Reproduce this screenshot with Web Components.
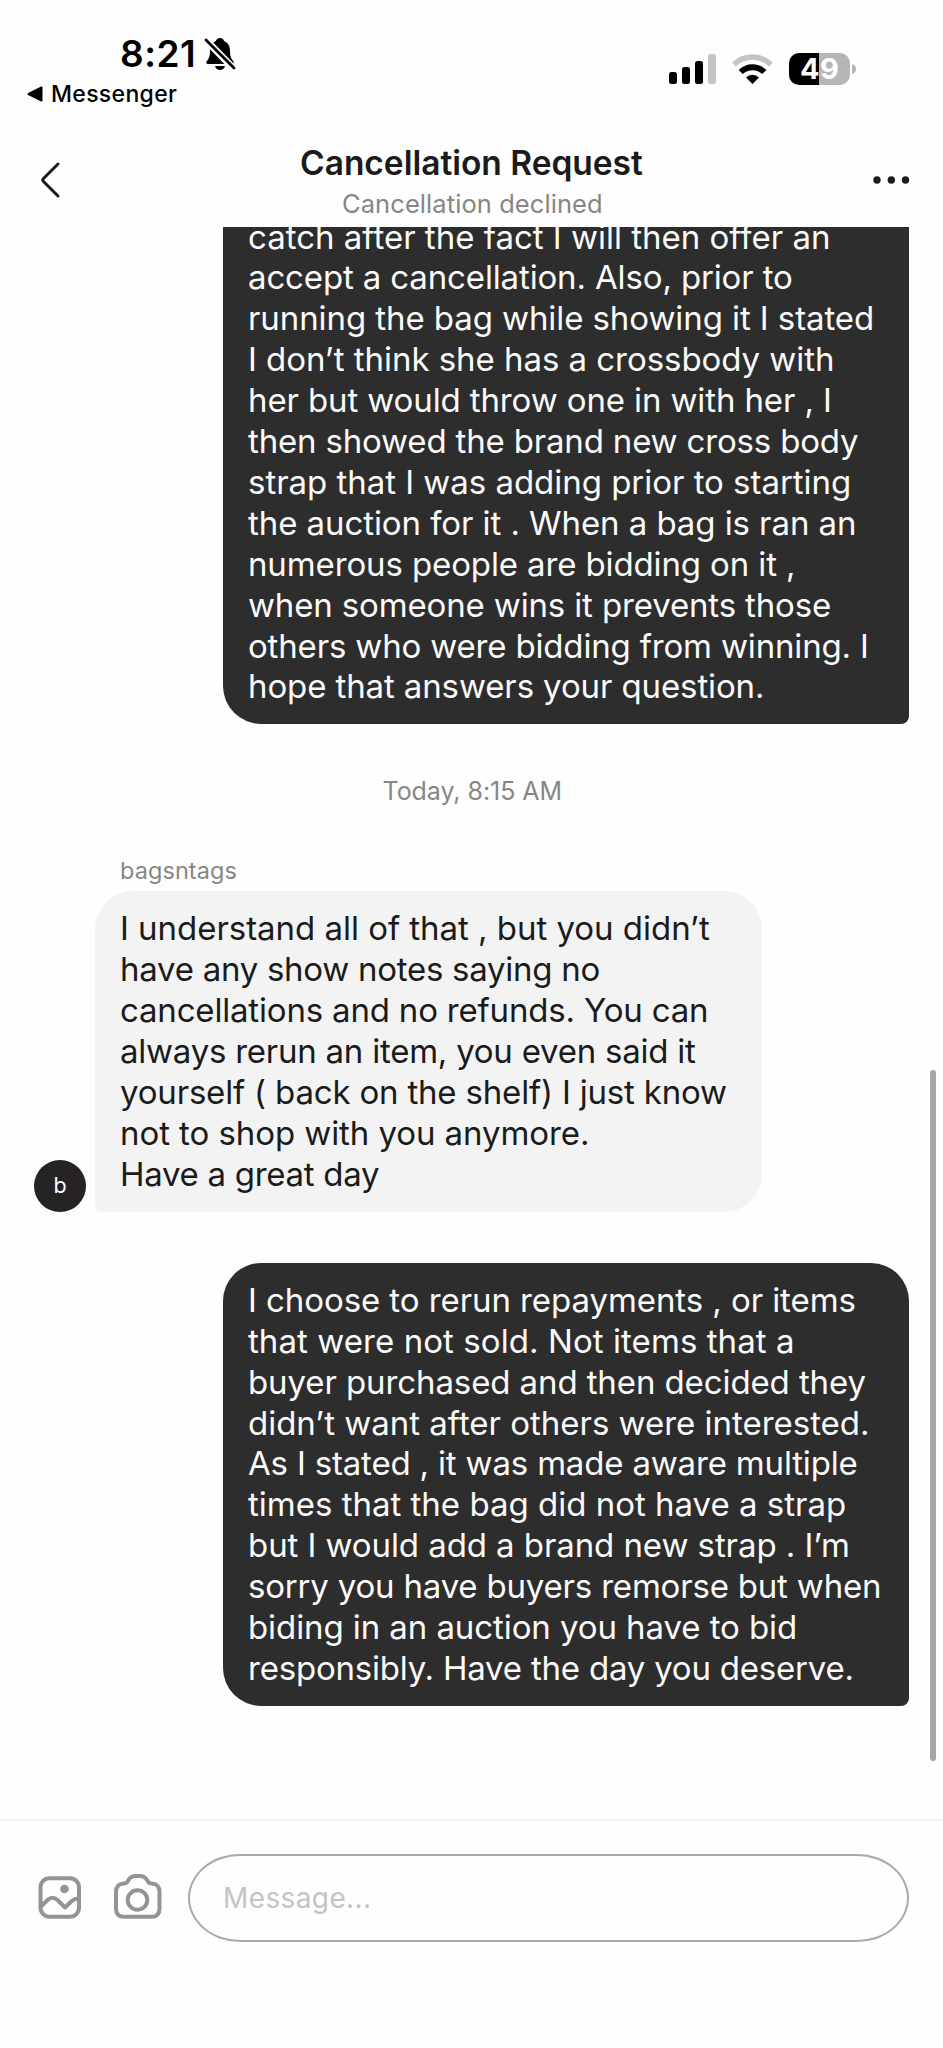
<!DOCTYPE html>
<html lang="en">
<head>
<meta charset="utf-8">
<title>Cancellation Request</title>
<style>
  html, body {
    margin: 0;
    background: #fefefe;
    font-family: Inter, "Liberation Sans", sans-serif;
  }
</style>
</head>
<body>
<phone-screen>
  <status-bar slot="status" time="8:21" app="Messenger" battery="49"></status-bar>
  <chat-header slot="header" heading="Cancellation Request" status="Cancellation declined"></chat-header>

  <chat-bubble mine continued>
    <text-line w="580">catch after the fact I will then offer an</text-line>
    <text-line w="544">accept a cancellation. Also, prior to</text-line>
    <text-line w="624">running the bag while showing it I stated</text-line>
    <text-line w="584">I don’t think she has a crossbody with</text-line>
    <text-line w="581">her but would throw one in with her , I</text-line>
    <text-line w="610">then showed the brand new cross body</text-line>
    <text-line w="601">strap that I was adding prior to starting</text-line>
    <text-line w="606">the auction for it . When a bag is ran an</text-line>
    <text-line w="545">numerous people are bidding on it ,</text-line>
    <text-line w="582">when someone wins it prevents those</text-line>
    <text-line w="618">others who were bidding from winning. I</text-line>
    <text-line w="514">hope that answers your question.</text-line>
  </chat-bubble>

  <chat-date>Today, 8:15 AM</chat-date>

  <chat-bubble author="bagsntags">
    <text-line w="590">I understand all of that , but you didn’t</text-line>
    <text-line w="479.5">have any show notes saying no</text-line>
    <text-line w="586">cancellations and no refunds. You can</text-line>
    <text-line w="576">always rerun an item, you even said it</text-line>
    <text-line w="606">yourself ( back on the shelf) I just know</text-line>
    <text-line w="467">not to shop with you anymore.</text-line>
    <text-line w="259">Have a great day</text-line>
  </chat-bubble>

  <chat-bubble mine>
    <text-line w="606.5">I choose to rerun repayments , or items</text-line>
    <text-line w="544">that were not sold. Not items that a</text-line>
    <text-line w="617.5">buyer purchased and then decided they</text-line>
    <text-line w="619">didn’t want after others were interested.</text-line>
    <text-line w="608.5">As I stated , it was made aware multiple</text-line>
    <text-line w="597">times that the bag did not have a strap</text-line>
    <text-line w="600">but I would add a brand new strap . I’m</text-line>
    <text-line w="631">sorry you have buyers remorse but when</text-line>
    <text-line w="547">biding in an auction you have to bid</text-line>
    <text-line w="603.5">responsibly. Have the day you deserve.</text-line>
  </chat-bubble>

  <message-bar slot="footer" placeholder="Message..."></message-bar>
</phone-screen>

<script>
const attach = (el, html) => {
  const template = document.createElement('template');
  template.innerHTML = html;
  el.attachShadow({ mode: 'open' }).appendChild(template.content.cloneNode(true));
};

const ctx = document.createElement('canvas').getContext('2d');

// One line of text, tracked so that its last glyph ends at `w` pixels
class TextLine extends HTMLElement {
  constructor() {
    super();
    attach(this, `
      <style>
        :host { display: block; white-space: nowrap; }
      </style>
      <slot></slot>
    `);
  }

  connectedCallback() {
    const w = parseFloat(this.getAttribute('w'));
    const text = this.textContent.trim();
    const style = getComputedStyle(this);
    ctx.font = `${style.fontWeight} ${style.fontSize} ${style.fontFamily}`;
    const natural = ctx.measureText(text).actualBoundingBoxRight;
    this.style.width = `${w}px`;
    if (text.length > 1) {
      this.style.letterSpacing = `${(w - natural) / (text.length - 1)}px`;
    }
  }
}

class PhoneScreen extends HTMLElement {
  constructor() {
    super();
    attach(this, `
      <style>
        :host {
          position: relative;
          display: flex;
          flex-direction: column;
          width: 943px;
          height: 2048px;
          overflow: hidden;
        }
        main {
          flex: 1;
          min-height: 0;
          overflow: hidden;
          display: flex;
          flex-direction: column;
        }
        .scrollbar {
          position: absolute;
          left: 930px;
          top: 1070px;
          width: 6px;
          height: 691px;
          border-radius: 3px;
          background: #a6a6a6;
        }
      </style>
      <slot name="status"></slot>
      <slot name="header"></slot>
      <main><slot></slot></main>
      <slot name="footer"></slot>
      <div class="scrollbar"></div>
    `);
  }
}

class StatusBar extends HTMLElement {
  constructor() {
    super();
    attach(this, `
      <style>
        :host {
          display: flex;
          justify-content: space-between;
          height: 130px;
          box-sizing: border-box;
          padding: 31px 86px 0 26px;
          color: #000;
        }
        .clock { display: flex; padding-left: 94px; height: 44px; }
        .clock text-line { font-size: 37px; font-weight: 600; line-height: 46px; }
        .bell { margin: 6px 0 0 11px; }
        .back { display: flex; margin-top: 5px; height: 28px; }
        .back svg { margin: 6px 8px 0 1px; }
        .back text-line { font-size: 23px; font-weight: 450; line-height: 29px; }
        .right { display: flex; margin-top: 22px; height: 32px; }
        .signal { margin-right: 14px; }
        .wifi { margin-right: 15px; }
        .battery {
          width: 61px;
          height: 32px;
          box-sizing: border-box;
          border-radius: 10px;
          padding-left: 11px;
          background: linear-gradient(90deg, #000 30px, #b6b6b6 30px);
          color: #fff;
        }
        .battery text-line { font-size: 29px; font-weight: 700; line-height: 32px; }
        .nub { margin: 11px 0 0 2px; }
      </style>
      <div>
        <div class="clock">
          <text-line w="73">${this.getAttribute('time')}</text-line>
          <svg class="bell" width="32" height="34" viewBox="0 0 32 34">
            <path d="M16 1c2.400 0 3.900 1.500 4.100 3 3.700 1.600 5.900 4.900 5.900 9.500 0 6 1 7.900 3.200 10.500.9 1.100.7 3.100-1.200 3.100H4c-2 0-2.200-1.800-1.200-3 2.200-2.600 3.200-4.600 3.200-10.600 0-4.600 2.200-7.900 5.900-9.500C12.100 2.500 13.600 1 16 1Z"/>
            <path d="M11 29h10c-.7 2.400-2.600 4-5 4s-4.300-1.600-5-4Z"/>
            <path d="M0 1 31 33" stroke="#fefefe" stroke-width="7"/>
            <path d="M2 3 30 31" stroke="#000" stroke-width="2.800" stroke-linecap="round"/>
          </svg>
        </div>
        <div class="back">
          <svg width="16" height="16" viewBox="0 0 16 16">
            <path d="M1.500 8 14.500 1.500v13Z" stroke="#000" stroke-width="2" stroke-linejoin="round"/>
          </svg>
          <text-line w="126">${this.getAttribute('app')}</text-line>
        </div>
      </div>
      <div class="right">
        <svg class="signal" width="48" height="32" viewBox="0 0 48 32">
          <rect x="0" y="19" width="8" height="12" rx="2.500"/>
          <rect x="13" y="14" width="8" height="17" rx="2.500"/>
          <rect x="26" y="8" width="8" height="23" rx="2.500"/>
          <rect x="39" y="1" width="8" height="30" rx="2.500" fill="#c4c4c4"/>
        </svg>
        <svg class="wifi" width="43" height="32" viewBox="0 0 43 32" fill="none">
          <path d="M3 11.500a26.500 26.500 0 0 1 37 0" stroke="#c4c4c4" stroke-width="5.500"/>
          <path d="M9.700 19a17 17 0 0 1 23.600 0" stroke="#000" stroke-width="5.800"/>
          <path d="M21.500 31 15 24.500a9.300 9.300 0 0 1 13 0Z" fill="#000"/>
        </svg>
        <div class="battery"><text-line w="38">${this.getAttribute('battery')}</text-line></div>
        <svg class="nub" width="5" height="10" viewBox="0 0 5 10">
          <path d="M0 0c2.500.5 4 2.500 4 5s-1.500 4.500-4 5Z" fill="#b6b6b6"/>
        </svg>
      </div>
    `);
  }
}

class ChatHeader extends HTMLElement {
  constructor() {
    super();
    attach(this, `
      <style>
        :host {
          display: grid;
          grid-template-columns: 60px 1fr 60px;
          height: 97px;
          box-sizing: border-box;
          padding: 0 33px 0 33px;
        }
        .back { margin: 31px 0 0 6px; }
        .more { margin: 43px 0 0 20px; }
        .titles {
          display: flex;
          flex-direction: column;
          align-items: center;
          padding-top: 13px;
        }
        .heading { font-size: 33.500px; font-weight: 600; line-height: 40px; color: #1b1b1b; }
        .status { margin-top: 4px; font-size: 25.500px; line-height: 33px; color: #868686; }
      </style>
      <svg class="back" width="22" height="38" viewBox="0 0 22 38">
        <path d="M19 3 4.500 17.500q-1.500 1.500 0 3L19 35" fill="none" stroke="#1b1b1b" stroke-width="3" stroke-linecap="round" stroke-linejoin="round"/>
      </svg>
      <div class="titles">
        <text-line class="heading" w="343">${this.getAttribute('heading')}</text-line>
        <text-line class="status" w="259">${this.getAttribute('status')}</text-line>
      </div>
      <svg class="more" width="40" height="14" viewBox="0 0 40 14" fill="#1b1b1b">
        <circle cx="7" cy="7" r="3.700"/>
        <circle cx="21.300" cy="7" r="3.700"/>
        <circle cx="35.500" cy="7" r="3.700"/>
      </svg>
    `);
  }
}

class ChatDate extends HTMLElement {
  constructor() {
    super();
    attach(this, `
      <style>
        :host {
          display: flex;
          justify-content: center;
          margin: 50.700px 0 50.200px;
          font-size: 25px;
          line-height: 32px;
          color: #868686;
        }
      </style>
      <text-line w="178">${this.textContent}</text-line>
    `);
  }
}

class ChatBubble extends HTMLElement {
  constructor() {
    super();
    const author = this.getAttribute('author');
    attach(this, `
      <style>
        :host {
          display: flex;
          flex: none;
          align-items: flex-end;
          padding-left: 34px;
          font-size: 33px;
          line-height: 40.900px;
        }
        :host([mine]) { padding-left: 223px; margin-top: 51.200px; }
        :host([mine][continued]) { margin-top: -27.500px; }
        .avatar {
          flex: none;
          width: 52px;
          height: 52px;
          margin-right: 9px;
          border-radius: 50%;
          background: #252324;
          color: #fff;
          font-size: 21.500px;
          line-height: 51px;
          text-align: center;
        }
        .author {
          margin: 0 0 6px 25px;
          font-size: 23.500px;
          line-height: 28px;
          color: #868686;
        }
        .bubble {
          box-sizing: border-box;
          width: 667px;
          padding: 17px 25px;
          border-radius: 38px 38px 38px 7px;
          background: #f3f3f3;
          color: #1b1b1b;
        }
        :host([mine]) .bubble {
          width: 685.500px;
          border-radius: 38px 38px 8px 38px;
          background: #2d2d2d;
          color: #fafafa;
        }
        :host([continued]) .bubble { border-radius: 0 0 8px 38px; }
      </style>
      ${author ? `<div class="avatar">${author[0]}</div>` : ''}
      <div>
        ${author ? `<text-line class="author" w="116.500">${author}</text-line>` : ''}
        <div class="bubble"><slot></slot></div>
      </div>
    `);
  }
}

class MessageBar extends HTMLElement {
  constructor() {
    super();
    attach(this, `
      <style>
        :host {
          display: flex;
          height: 229.500px;
          box-sizing: border-box;
          padding: 33px 34px 0 36px;
          border-top: 2px solid #f1f1f1;
        }
        svg { flex: none; margin-top: 18px; }
        .photo { margin-right: 28px; }
        .camera { margin-right: 24px; }
        .field {
          flex: 1;
          height: 88px;
          box-sizing: border-box;
          border: 2px solid #a9a9a9;
          border-radius: 52px / 44px;
          padding: 0 33px;
          font-size: 28px;
          line-height: 85px;
          color: #c4c4c4;
        }
      </style>
      <svg class="photo" width="48" height="50" viewBox="0 0 48 50" fill="none" stroke="#949494" stroke-width="4">
        <rect x="4.500" y="6.300" width="38.500" height="38.500" rx="9"/>
        <path d="M5 34.500 11.500 28q5-4.500 10 0l7.500 7.500 6.500-6.300q3.500-3 7.500-2.700" stroke-linejoin="round"/>
        <circle cx="28.500" cy="17" r="4.300" fill="#949494" stroke="none"/>
      </svg>
      <svg class="camera" width="52" height="50" viewBox="0 0 52 50" fill="none" stroke="#949494" stroke-width="4" stroke-linejoin="round">
        <path d="M4 20q0-8 7.500-8.500c3 0 3.500-1 5-3.500 2-3.200 3.500-4 7-4h4.500c3.500 0 5 .8 7 4 1.500 2.500 2 3.500 5 3.500q7.500.5 7.500 8.500v16.500q0 8.300-8 8.300H12q-8 0-8-8.300Z"/>
        <circle cx="25.500" cy="28" r="9.800"/>
      </svg>
      <div class="field"><text-line w="146">${this.getAttribute('placeholder')}</text-line></div>
    `);
  }
}

customElements.define('phone-screen', PhoneScreen);
customElements.define('status-bar', StatusBar);
customElements.define('chat-header', ChatHeader);
customElements.define('chat-date', ChatDate);
customElements.define('chat-bubble', ChatBubble);
customElements.define('message-bar', MessageBar);
// last, since a line measures itself in the font of the element around it
customElements.define('text-line', TextLine);
</script>
</body>
</html>
